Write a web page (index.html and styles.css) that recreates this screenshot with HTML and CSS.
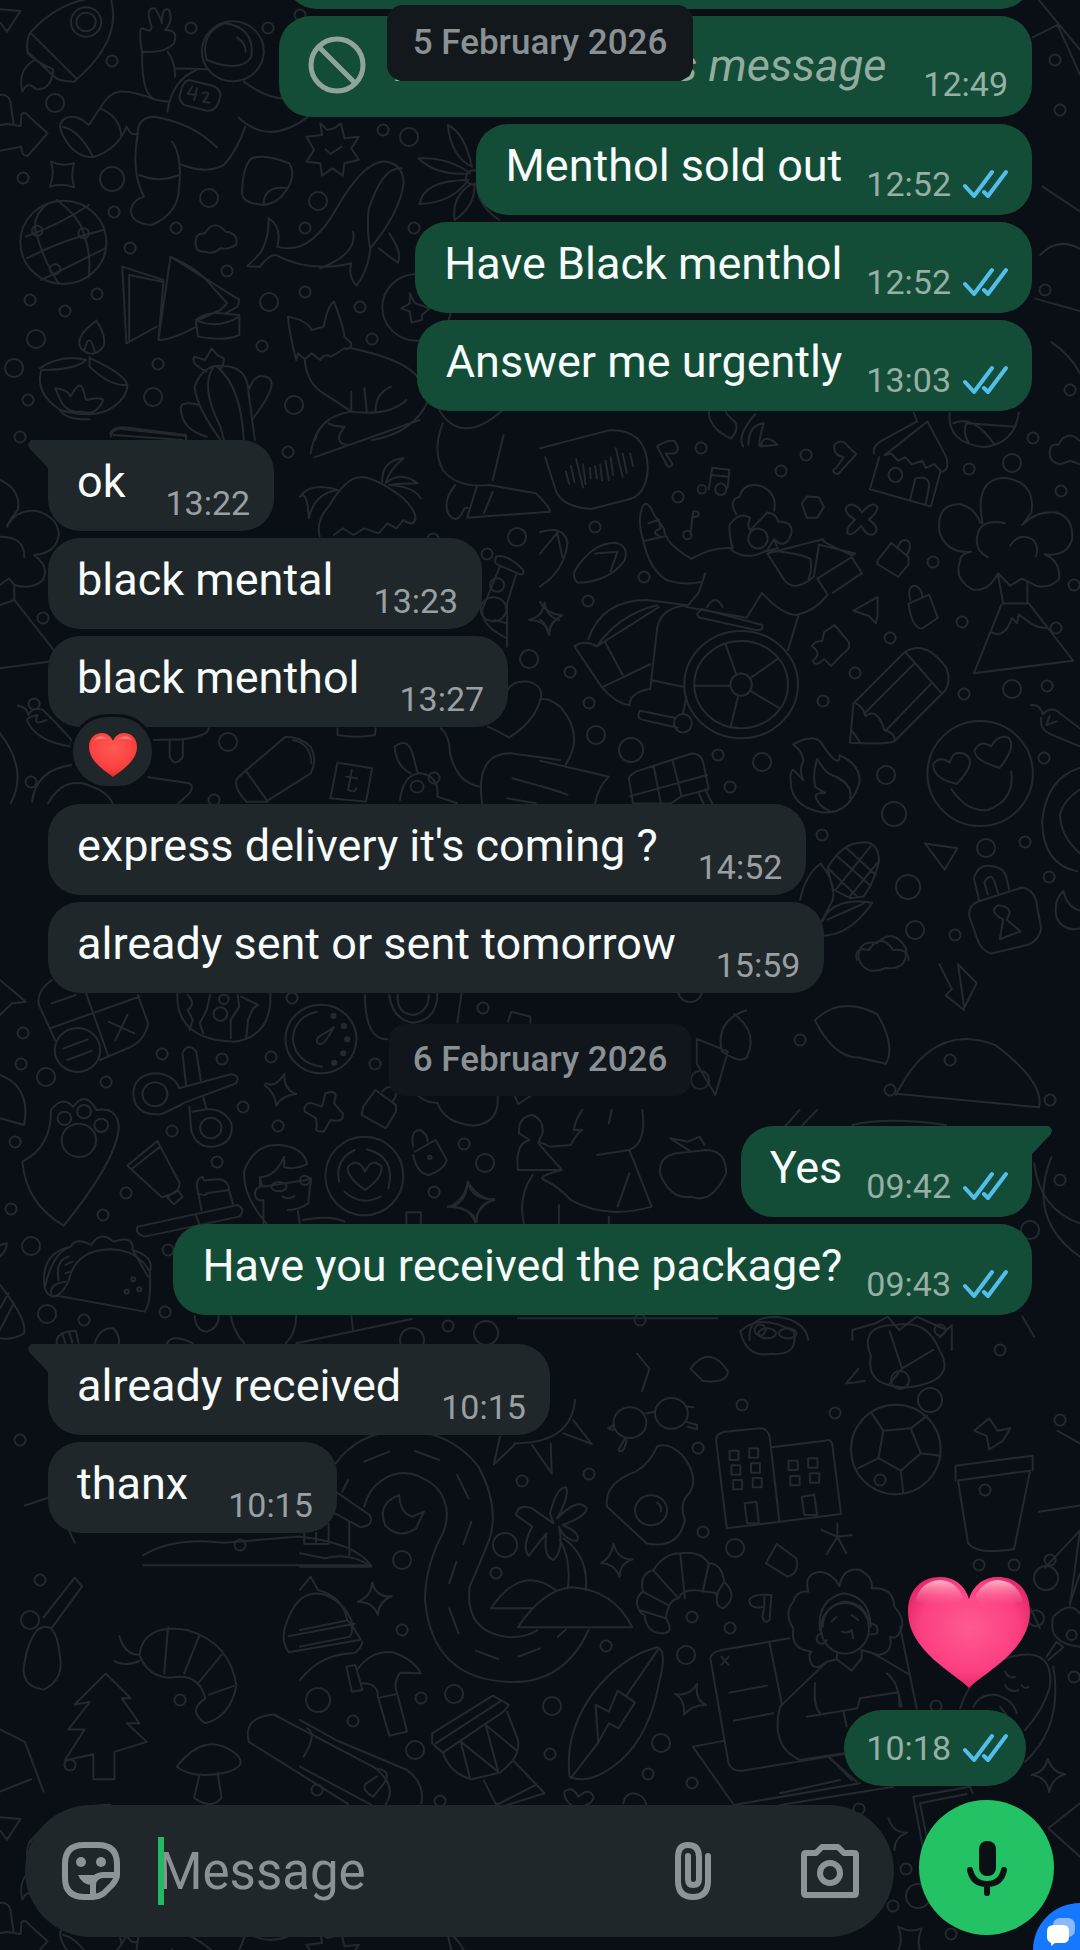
FILE: index.html
```html
<!DOCTYPE html>
<html lang="en">
<head>
    <meta charset="UTF-8">
    <meta name="viewport" content="width=device-width, initial-scale=1.0">
    <title>Chat</title>
    <link rel="stylesheet" href="styles.css">
</head>
<body>
    <!-- Wallpaper doodles, one group per area -->
    <svg class="wallpaper" viewBox="0 0 1080 1950" preserveAspectRatio="xMidYMin slice" aria-hidden="true">
        <defs>
            <symbol id="check" viewBox="0 0 45 30">
                <path d="M2 17l9 10L29 3M21 23l4 4L43 3" fill="none" stroke="#53bdeb" stroke-width="4" stroke-linecap="round" stroke-linejoin="round"/>
            </symbol>
            <path id="dots-s" d="M268 28h.1M191 28h.1M300 15h.1M112 61h.1M23 178h.1M114 212h.1M176 228h.1M130 248h.1M30 300h.1M97 294h.1M65 311h.1M227 271h.1M305 292h.1M305 228h.1M360 307h.1M372 339h.1M262 346h.1M158 364h.1M28 400h.1M383 130h.1M414 228h.1M20 437h.1M288 452h.1M433 539h.1M487 554h.1M43 618h.1M34 704h.1M31 782h.1M214 800h.1M434 778h.1M701 448h.1M806 455h.1M781 471h.1M678 497h.1M969 469h.1M1033 438h.1M1061 491h.1M595 527h.1M644 577h.1M588 601h.1M933 562h.1M890 638h.1M962 622h.1M1056 628h.1M1074 585h.1M570 672h.1M589 703h.1M823 701h.1M855 673h.1M964 694h.1M1047 686h.1M1044 758h.1M718 755h.1M730 787h.1M822 835h.1M1025 842h.1M1049 877h.1M955 935h.1M23 1033h.1M21 1064h.1M106 1082h.1M162 1054h.1M222 1059h.1M271 1057h.1M292 998h.1M243 1107h.1M278 1126h.1M172 1131h.1M15 1142h.1M217 1162h.1M126 1193h.1M11 1209h.1M103 1215h.1M168 1250h.1M165 1312h.1M84 1320h.1M464 1144h.1M434 1192h.1M483 1008h.1M448 1326h.1M375 1064h.1M522 1481h.1M589 1474h.1M698 1448h.1M703 1532h.1M742 1405h.1M835 1413h.1M496 1573h.1M402 1630h.1M692 1617h.1M730 1628h.1M606 1646h.1M421 1698h.1M353 1721h.1M550 1754h.1M648 1774h.1M692 1783h.1M440 1801h.1M317 1790h.1M979 1565h.1M1014 1565h.1M936 1706h.1M1074 1677h.1M859 1809h.1M906 1869h.1M893 1906h.1M951 1934h.1M20 1440h.1M63 1490h.1M240 1545h.1M40 1580h.1M70 1765h.1M180 1700h.1M1000 1350h.1M940 1330h.1M1060 1420h.1M880 1480h.1M985 1490h.1M1050 1560h.1M890 1090h.1M950 1060h.1M1050 1100h.1M1060 1180h.1M800 1040h.1M760 1330h.1M640 1320h.1M1055 60h.1M1060 110h.1M1045 290h.1M1070 390h.1"/>
            <path id="dots-m" d="M55 103h.1M209 198h.1M318 201h.1M36 339h.1M269 302h.1M153 397h.1M14 368h.1M409 137h.1M294 405h.1M517 537h.1M1012 463h.1M596 735h.1M762 762h.1M886 775h.1M1012 689h.1M986 848h.1M915 930h.1M46 1077h.1M31 1246h.1M47 1314h.1M485 1163h.1M402 1560h.1M454 1694h.1M686 1655h.1M552 1706h.1M415 1750h.1M661 1743h.1M735 1548h.1M529 659h.1M228 742h.1M802 1180h.1M30 1620h.1M900 1380h.1M1030 1230h.1M700 1080h.1"/>
            <path id="dots-l" d="M112 179h.1M631 750h.1M894 814h.1M908 887h.1M505 1545h.1M486 1333h.1M318 1700h.1M930 1400h.1M1046 1578h.1M918 1896h.1M412 1340h.1M690 990h.1"/>
        </defs>
        <g class="rings">
            <use href="#dots-s" class="ring-s"/><use href="#dots-s" class="hole-s"/>
            <use href="#dots-m" class="ring-m"/><use href="#dots-m" class="hole-m"/>
            <use href="#dots-l" class="ring-l"/><use href="#dots-l" class="hole-l"/>
        </g>

        <!-- rocket, astronaut, globe, whale, lamp, cactus, fox -->
        <g id="space" transform="scale(.3444 .3333)">
            <path d="M0 28L60 33L20 95L0 68M88 98Q180-10 320-10Q360 120 215 245L190 243Q165 240 158 230L80 155Q75 120 88 98ZM88 98L222 236M80 160Q110 190 155 208Q150 270 105 268Q80 240 65 275Q50 210 100 180"/>
            <circle cx="250" cy="66" r="44"/><circle cx="250" cy="66" r="28"/>
            <path d="M413 160Q400 80 415 85Q440 100 440 80Q420 20 450 25Q465 50 470 70Q470 20 490 28Q505 60 480 90Q520 90 505 130Q480 160 415 155ZM413 160Q410 290 455 300L490 305M487 155Q510 190 508 230M508 205L600 208M455 300Q380 270 345 275Q315 280 290 325L258 375Q220 340 190 355Q165 370 180 400Q210 470 270 472Q340 450 368 380M290 325Q350 350 352 410M368 380Q380 410 400 400Q400 350 450 350Q560 370 630 442M486 335Q500 240 570 210M708 245Q780 300 835 295M692 352Q780 440 895 350M712 380Q690 450 650 495Q600 525 522 492M500 425Q530 470 520 560Q520 640 440 675Q380 670 380 630Q385 600 418 590Q380 520 400 400M405 525Q460 550 520 525M548 240L620 258Q645 270 638 295Q630 335 600 332L535 315Q515 300 525 275Q530 245 548 240Z"/>
            <circle cx="676" cy="154" r="90"/><path d="M600 180Q580 100 650 70Q740 80 730 170Q700 220 600 180M688 112Q715 130 713 155M558 260L545 282L570 285M572 265L564 300M588 280Q620 270 590 305L608 308"/>
            <path d="M0 375L20 372L60 378L62 345Q70 330 85 350L138 400L80 468Q62 470 62 440L0 452M0 285Q30 280 32 320L40 375M148 485Q180 500 215 490Q205 525 215 562Q180 548 145 560Q160 520 148 485M182 380Q230 390 270 470"/>
            <circle cx="184" cy="727" r="125"/><path d="M75 710Q180 670 258 615M78 775Q180 720 300 690M120 840Q200 800 305 745M140 610Q90 650 105 700Q130 790 170 850M165 600Q230 650 243 700Q265 760 258 830"/>
            <circle cx="108" cy="692" r="15"/><circle cx="243" cy="700" r="15"/><circle cx="160" cy="808" r="15"/>
            <path d="M355 800L475 840L460 1020L495 770L695 900L690 920L655 940M495 770Q560 800 590 830L660 910L640 930L575 960M355 800L367 1030L455 980M375 825L375 1025M375 825L470 845M460 1020Q500 1020 570 980M568 960Q600 935 640 940L695 945V1005Q650 1025 575 1010ZM568 960Q630 990 695 950"/>
            <path d="M730 475Q770 460 840 490Q860 520 835 565Q810 610 765 615Q700 610 703 575Q705 500 730 475M765 615Q765 555 835 565M570 740Q560 700 595 700Q620 655 655 695Q695 700 685 735Q660 750 640 745Q620 765 595 755Q570 755 570 740M930 370L950 390L970 385L990 370L1000 415L1042 410L1020 445L1042 480L1000 490L995 527L965 505L935 527L930 490L890 485L912 450L890 410L935 405ZM945 448L960 462L992 440"/>
            <path d="M780 655Q820 680 805 740Q900 770 980 620Q1060 480 1120 485Q1170 490 1172 550Q1160 640 1075 745Q1070 810 1035 857Q1010 830 1020 790Q900 820 800 765Q780 765 755 800Q735 800 718 798Q760 760 765 740Q780 710 780 655M1165 505Q1110 500 1070 630Q1065 700 1075 745M1025 695Q1040 760 930 805M1130 700Q1170 760 1155 788Q1130 770 1100 745"/>
            <path d="M1300 375Q1350 400 1370 500Q1310 470 1300 375M1215 475Q1300 470 1365 520Q1270 530 1215 475M1218 612Q1230 540 1360 540Q1310 610 1218 612M1378 550Q1380 620 1320 660Q1310 590 1370 550M1385 560Q1390 620 1450 660"/>
            <circle cx="1375" cy="533" r="22"/><circle cx="1210" cy="922" r="100"/><path d="M1190 880L1205 910L1248 925L1225 945L1225 960L1195 968L1190 935L1165 925L1190 910Z"/>
            <path d="M280 962Q310 1010 300 1040Q270 1080 235 1045Q215 1010 280 962M245 1050Q260 990 275 1055M115 1105Q180 1060 250 1080Q220 1110 120 1110Q100 1180 175 1230Q280 1260 330 1220Q370 1190 370 1155Q320 1160 260 1100V1070M370 1155Q360 1120 262 1075M160 1165Q200 1170 205 1190Q230 1140 240 1165L250 1200Q290 1190 300 1200Q280 1250 240 1235Q200 1240 180 1210ZM175 1230Q190 1260 260 1258"/>
            <path d="M600 1115Q550 1090 565 1070L595 1080L615 1045L630 1065L650 1075Q650 1100 640 1105M640 1320Q570 1220 565 1160Q590 1090 650 1098Q720 1100 722 1180L740 1320M620 1100Q580 1160 640 1280L650 1320M630 1100Q700 1160 708 1320M722 1170Q740 1120 770 1130Q820 1140 735 1255M580 1215Q520 1200 525 1230Q530 1290 600 1310M320 1300Q330 1280 360 1282L540 1305V1320M330 1305L530 1320"/>
            <path d="M860 1080Q840 1000 836 950Q890 960 905 990L940 980Q950 920 970 905Q1000 990 1000 1010L1020 1030Q1020 1050 1000 1045Q980 1060 960 1070Q940 1060 930 1080L905 1060L885 1078L865 1060ZM885 1080Q890 1150 940 1180Q1000 1220 1020 1235M1020 1045Q1180 1080 1215 1135M1020 1175V1235M1058 1165L1065 1235M1090 1235Q1090 1180 1135 1160M1180 1200Q1130 1250 1020 1235Q930 1250 915 1320M1245 1200Q1200 1300 1080 1320M1275 1230Q1340 1340 1460 1230"/>
        </g>
        <use href="#space" y="1808"/>

        <!-- palm hut, clouds, bulb -->
        <g transform="translate(0 420) scale(.3571 .3333)">
            <path d="M870 100Q880 30 920 0M880 112L1175 0M920 10Q930 20 965 20Q930 70 975 75M1240 10Q1210 90 1240 150Q1280 205 1370 195L1500 220Q1540 260 1540 275L1308 293L1335 200M1380 215L1355 280M1275 195Q1240 240 1255 280Q1280 320 1300 265L1310 263M1410 45L1380 180M310 50Q315 20 350 28L522 48M895 350Q885 300 920 260Q970 170 1010 172Q1050 170 1130 235Q1180 290 1155 310Q1140 310 1130 300L1110 325L1085 310L1060 340L1020 325L990 345L960 325L935 345M840 230Q870 185 945 210Q880 220 865 295Q860 210 840 230M1070 185Q1070 120 1130 115Q1090 150 1080 190Q1120 150 1170 190Q1120 190 1090 195Q1160 200 1178 235"/>
            <path d="M0 180Q60 210 50 270Q20 310 20 320Q40 270 100 272Q160 290 165 340Q160 400 95 405Q140 440 120 480Q90 510 40 495L25 475L0 495M0 350Q70 350 68 412M40 500V540L150 690M40 540L0 555M0 745L135 725M1390 410Q1420 400 1465 450Q1470 470 1450 460L1395 435Q1380 430 1390 410M1400 440L1350 570M1350 570Q1350 620 1420 655V610L1385 600M1445 465L1420 550V680"/>
            <circle cx="1392" cy="495" r="20"/><circle cx="1382" cy="568" r="36"/>
            <path d="M1525 548Q1530 590 1565 600Q1540 600 1538 645Q1530 600 1482 600Q1520 590 1525 548M1420 815Q1430 780 1480 785Q1530 800 1510 850Q1490 910 1425 953Q1390 930 1365 920M50 857Q75 860 80 885Q90 860 120 870Q160 910 200 960V980Q100 965 75 900Q80 890 105 885Q90 920 130 900M430 960L510 958Q580 950 585 925M475 960V1010Q490 1045 512 1010V960M945 925V945Q1000 955 1050 945L1052 925M665 1075Q650 1100 690 1145H745L870 1060Q890 1020 870 980Q840 950 800 950L690 1050ZM690 1055L750 1145M820 960Q870 970 872 1030M945 1028L1042 1045L1025 1145L925 1135ZM985 1050L975 1110Q995 1120 998 1105M970 1070L1000 1075M1105 980Q1140 950 1155 1000L1170 1060M1105 980Q1110 1040 1150 1060M1120 1140Q1130 1060 1180 1060Q1230 1070 1225 1130L1280 1150M1235 925Q1260 950 1260 1000Q1280 1090 1345 1100M1350 1150Q1330 1000 1430 1000L1568 1020M1435 1075L1568 1115M1420 1135L1500 1150M90 1145Q100 1050 200 1035M415 1072L530 1090Q545 1100 530 1120L500 1150M135 1150Q170 1080 230 1090Q300 1110 315 1150M0 940Q80 1050 30 1150"/>
            <circle cx="1168" cy="1100" r="18"/>
        </g>

        <!-- wheelchair, volcano, pencil, emoji, fire, lock, corn -->
        <g transform="translate(540 400) scale(.3444 .3571)">
            <path d="M0 135L200 85Q310 80 313 190Q310 270 250 280L150 305Q60 300 45 250L15 160M75 200L85 235M90 185L100 230M105 165L125 245M125 180L132 235M145 190L147 220M160 185L165 220M175 180L180 225M190 170L200 225M205 160L212 210M220 135L240 215M240 150L252 205M262 150L270 185M340 130Q370 110 390 115Q410 140 390 150L365 150L385 180Q380 190 370 185ZM490 30Q490 80 555 108Q580 80 565 60Q540 40 540 32M590 130Q570 100 625 40M605 125Q605 70 650 65Q630 130 640 130Q650 90 690 125L640 130M855 125Q870 110 885 120L918 152L865 208Q840 200 860 190L882 160Q850 155 855 125"/>
            <path d="M490 250L500 190L550 195L545 245M497 210L548 215M437 375L445 312Q465 310 460 325L440 330"/><circle cx="470" cy="250" r="12"/><circle cx="525" cy="250" r="16"/><circle cx="428" cy="378" r="12"/>
            <path d="M300 295Q315 280 330 320L360 360Q360 400 440 445Q500 410 560 415Q550 390 550 350Q580 310 610 330Q600 350 610 365L660 315Q690 320 690 340Q740 340 728 380Q710 420 680 390L660 420Q760 430 785 445Q790 480 780 500M660 430L710 505Q740 540 795 495L810 405L915 430L905 435L830 400L820 390ZM570 320Q545 280 580 270Q590 230 640 240Q690 260 680 310M680 390L690 415L650 425Q600 450 555 420M300 395Q320 480 370 505Q420 520 465 510M480 485L460 540L425 580L600 610L645 540Q700 600 745 602Q800 590 835 545L805 500L905 440L935 485L850 540M750 605L720 700M300 395Q280 330 300 295M300 395L360 382M315 345L345 335L350 360Q320 370 345 380"/>
            <circle cx="633" cy="388" r="28"/><path d="M140 670Q180 560 310 560L430 575Q350 580 340 640L320 810M165 690Q230 600 340 575M100 690L180 805L320 740M100 690Q130 670 165 690L345 580M190 680L240 770M180 805Q220 850 260 855Q260 820 315 810M325 785L415 803M290 870Q280 890 295 895L400 918M290 870L390 890M460 595Q450 600 465 610L630 645Q650 645 645 630L470 585ZM485 580Q510 540 530 580"/>
            <ellipse cx="584" cy="797" rx="165" ry="150"/><ellipse cx="584" cy="797" rx="136" ry="122"/><circle cx="584" cy="797" r="31"/><circle cx="415" cy="905" r="26"/>
            <path d="M538 682L570 768M690 725L612 778M695 863L612 815M553 917L575 830M450 800H552M415 880L425 830"/>
            <path d="M970 150Q965 130 990 115L1095 60L1085 35M1125 60L1180 160Q1190 200 1165 200L1145 180L1120 190L1110 170L1080 180L1060 160L1040 170L1020 150L1000 155ZM985 160L958 250L1135 298L1163 200M1075 278L1090 220Q1130 210 1130 240L1120 290M1190 35Q1180 120 1290 132Q1380 120 1390 35M1240 65L1380 75M1200 65Q1260 40 1320 125M1240 60Q1225 90 1245 120"/><circle cx="1032" cy="210" r="20"/>
            <path d="M760 290L775 270L810 272L824 300L805 330L775 330ZM890 300Q910 280 935 315Q965 280 980 300Q980 315 955 335Q990 360 970 375Q950 385 933 352Q905 385 892 372Q890 355 915 335Q880 315 890 300M980 450L1020 400L1070 440L1070 460L1040 495L980 460ZM1040 410Q1050 385 1070 395Q1080 410 1065 435M1070 570L1130 545L1155 610L1110 640Q1080 640 1070 570M1075 560Q1065 520 1090 520Q1110 530 1110 550M910 590L980 552V605L975 625L955 605ZM855 630L890 670Q910 690 880 710L845 745L825 725Q800 750 792 730Q820 710 790 690Q795 675 820 675L825 650ZM0 565Q20 600 65 603Q30 620 25 655Q15 620 0 615M100 480Q150 400 220 400Q260 410 245 450Q200 510 110 512Q95 500 100 480M160 430L225 425L205 480M0 430L50 372L65 440M0 370Q70 350 80 400Q70 480 0 522"/>
            <path d="M1285 345Q1260 220 1350 218Q1440 230 1427 315L1400 350Q1440 310 1500 315Q1550 330 1545 390Q1530 440 1465 432Q1510 450 1508 500Q1480 530 1440 520L1400 500L1365 520L1330 485Q1300 540 1255 530Q1200 500 1220 450Q1220 430 1252 425Q1180 430 1160 370Q1150 290 1220 292Q1260 300 1280 345M1300 440Q1260 420 1270 380Q1280 330 1350 345M1365 408Q1390 370 1430 390Q1450 410 1440 438M1330 490L1345 570H1415V510M1340 572L1260 765L1548 730L1420 570M1310 650Q1350 670 1370 610L1385 625L1390 600L1410 615Q1440 640 1470 638M1480 150Q1480 120 1505 125Q1530 80 1568 115M1480 150Q1480 175 1510 180L1540 170L1568 180"/>
            <path d="M900 960L910 850L1060 705Q1120 670 1180 750Q1195 790 1175 815L1030 955Q1020 965 900 960M915 848Q940 860 945 885Q980 860 1000 925Q1030 930 1030 955M1060 705L1165 820M945 875L1085 740M1005 925L1135 795M905 925L930 960"/>
            <ellipse cx="1278" cy="1046" rx="153" ry="147"/><path d="M1210 1075Q1140 1060 1142 1020Q1160 995 1190 1015Q1200 980 1230 990Q1275 1010 1210 1075M1335 1030Q1260 1010 1262 980Q1280 950 1310 970Q1330 935 1360 945Q1385 970 1335 1030M1195 1090Q1240 1155 1300 1148Q1380 1120 1368 1040M735 965Q800 930 820 965Q850 1010 865 1010Q870 1010 870 995Q930 1020 928 1070Q900 1160 820 1155Q730 1140 728 1070Q725 1040 735 1035L765 1065Q750 1040 765 1010Q760 980 735 965M805 1005Q790 1050 800 1085L828 1100Q800 1100 800 1110Q810 1140 840 1150M805 1005Q830 1050 860 1055Q910 1080 900 1115"/>
            <path d="M1248 1450Q1240 1420 1270 1405L1400 1365Q1430 1370 1440 1400L1455 1480Q1450 1510 1420 1525L1310 1550Q1280 1540 1270 1510ZM1275 1400L1260 1340Q1270 1300 1310 1305Q1350 1310 1355 1340L1362 1370M1300 1385L1290 1350Q1310 1320 1320 1350L1330 1380M1335 1510L1345 1455Q1300 1430 1330 1415Q1380 1420 1355 1455L1395 1488ZM1118 1242L1212 1255L1175 1315ZM835 1310Q880 1240 930 1240Q980 1230 985 1290Q970 1350 940 1390L900 1395L850 1370ZM860 1275L960 1360M890 1255L975 1330M835 1310L920 1390M860 1370L960 1250M900 1390L985 1290M755 1400Q770 1330 815 1298Q860 1350 850 1400L815 1465M820 1460Q850 1390 965 1408Q900 1500 820 1500M835 1455L940 1410M920 1568Q910 1530 955 1540Q990 1490 1025 1540Q1070 1535 1070 1568M1560 1320Q1460 1300 1458 1180Q1470 1060 1568 1030M1568 1270Q1510 1220 1510 1160Q1520 1120 1568 1090M1520 1375Q1490 1400 1500 1450Q1520 1490 1568 1480M1520 1375Q1530 1420 1568 1430M1425 855Q1450 850 1460 880Q1480 860 1500 870L1568 920M1455 890Q1450 920 1480 935L1568 970M1480 885L1470 910L1500 900M258 1060Q260 1050 280 1040L440 990Q470 990 475 1020L490 1090L410 1110L380 1130H270ZM330 1025L350 1125M385 1010L410 1105M260 1110L485 1050M460 1100L475 1130M480 1090L500 1130M0 1010L200 1055Q170 1080 160 1130M0 1080L80 1105M75 1020Q130 940 60 860Q20 830 0 840"/>
        </g>

        <!-- flags, stopwatch, scissors, tooth, taco, girl, coffee -->
        <g transform="translate(0 960) scale(.3444 .3333)">
            <path d="M0 60L75 125L35 130L0 165M150 60Q100 100 115 140L160 240M250 100L315 290M145 205L405 110M400 105L430 190Q420 245 370 265L290 300M150 130L220 105M315 185L390 220M370 165L335 240M185 265L255 238M195 300L268 272M515 100Q510 240 680 245Q790 230 785 100M545 105Q570 130 545 150L560 180L550 210M610 105L600 150L580 190L590 220M690 105L695 140L670 180V235M700 110L750 135L735 145L720 180L715 235M920 155Q855 170 850 238Q860 310 935 320M970 202L950 235Q935 260 922 248Q915 235 930 228ZM1060 105Q1060 240 1125 238M1130 105Q1140 180 1200 188Q1270 180 1270 100M1155 105Q1150 160 1200 165Q1245 155 1245 105M1340 100L1328 188M1475 185L1485 155L1540 170V188"/>
            <circle cx="225" cy="270" r="66"/><circle cx="932" cy="237" r="103"/><circle cx="640" cy="162" r="20"/><circle cx="650" cy="118" r="14"/>
            <circle cx="450" cy="403" r="36"/><circle cx="612" cy="504" r="31"/><path d="M525 435L470 462Q390 470 387 400Q390 340 460 340Q510 350 520 385L670 343Q700 345 685 370L530 430ZM540 375L530 280Q545 245 570 275L583 360M550 440L555 510Q570 565 620 560Q680 550 672 490Q650 445 600 448L590 412M558 455L600 448"/>
            <path d="M65 605Q150 560 148 450Q180 405 212 440Q250 390 280 450Q340 440 345 500Q340 600 185 797Q75 730 65 605"/><circle cx="187" cy="475" r="20"/><circle cx="244" cy="455" r="20"/><circle cx="294" cy="496" r="20"/><circle cx="229" cy="541" r="50"/>
            <path d="M0 345Q90 380 70 495L0 475M370 617L457 543L522 670Q520 690 505 700L470 712ZM385 625L465 560M485 712L515 690L530 710L505 733ZM400 800L690 735Q715 750 695 770L420 830Q390 820 400 800M568 765L580 795M585 750L572 680Q570 655 588 650Q590 665 600 660L640 658Q665 665 665 690L678 738M575 700Q600 710 600 700L665 690M772 370Q800 385 825 342Q825 390 860 402Q820 405 802 437Q800 400 768 375M945 400Q970 390 975 405L970 430L995 460Q1000 490 960 480L940 515Q910 515 920 500L918 475L885 455Q880 435 900 428L935 440ZM1055 440L1090 390L1150 435V455L1120 505L1050 465ZM1110 395Q1130 370 1148 390Q1155 405 1140 425M1205 575L1265 540L1297 600Q1290 630 1245 645Q1210 640 1200 585M1200 560Q1190 510 1220 510Q1240 520 1242 545M1358 665Q1370 720 1435 718Q1385 740 1380 788Q1365 740 1305 740Q1350 720 1358 665"/>
            <circle cx="1248" cy="592" r="5"/><path d="M773 790Q700 700 710 630Q740 550 810 555Q880 560 892 612Q860 630 825 622V590Q800 650 755 652V680Q735 690 742 710Q750 725 765 720V790M755 652L762 680L890 660Q910 640 900 680L895 730Q870 750 835 750M865 752L870 790M820 710Q840 720 855 708M880 780Q960 765 1000 785M1180 790V757H1222V790"/>
            <ellipse cx="810" cy="680" rx="22" ry="14"/><circle cx="885" cy="661" r="14"/><ellipse cx="1058" cy="648" rx="113" ry="118"/><path d="M1060 690Q1005 650 1010 620Q1040 590 1060 635Q1080 590 1108 620Q1110 655 1060 690M1030 570Q970 600 985 665M1065 568Q1150 590 1128 685M1000 695Q1050 740 1105 710"/>
            <path d="M130 985Q115 880 205 860Q220 830 265 855Q290 810 330 845Q390 825 385 870Q450 890 435 935M205 860Q150 880 130 985Q140 1015 170 1008L420 1055Q440 1030 435 935Q400 870 320 868Q220 870 200 960Q180 1010 150 1010M150 1010Q140 970 190 965M200 890Q160 900 170 960M385 870L430 950M190 940L205 935M190 915L210 905"/><circle cx="387" cy="958" r="6"/><circle cx="368" cy="995" r="6"/><circle cx="404" cy="988" r="6"/>
            <path d="M0 975Q80 1080 70 1120Q40 1140 0 1135M0 1045L25 1000M0 1110L40 1030M0 890Q20 870 20 850L0 855M165 1150Q160 1115 220 1112L228 1150M180 1120L190 1150M200 1115L210 1148M275 1150Q290 1100 330 1105Q350 1130 345 1150M485 1150Q500 1120 560 1150M565 1068Q570 1115 600 1115Q635 1105 635 1068M670 1068Q680 1120 710 1150M860 1068Q860 1120 830 1150M1020 1068L1025 1110M860 1150L1195 1077M1215 408Q1240 430 1270 428Q1290 490 1375 497Q1450 490 1445 410M1495 410L1505 432L1540 408"/>
            <path class="solid" d="M968 168h1M998 198h1M1008 238h1M996 280h1M970 308h1"/>
        </g>

        <!-- person with drink, apple, pin, watermelon -->
        <g transform="translate(160 1110) scale(.5867 .3333)">
            <path d="M610 180Q605 100 630 90L612 70Q610 20 635 15Q655 30 652 70L645 95L665 110L700 105Q710 70 720 60L705 60Q710 20 720 0M645 100L685 180H612M685 180Q640 200 655 210Q680 230 700 270Q760 330 838 290L800 120L745 135M770 0L765 40M800 120Q830 100 822 0M620 340Q610 260 635 195M680 340V285M765 340V320M800 190L780 290M610 625H950M880 130Q850 140 852 190Q870 270 905 260Q940 285 965 190Q965 120 930 120L905 125ZM905 125L870 85L900 95L920 80L928 105M490 290Q520 290 525 215Q540 265 570 270Q540 280 540 335Q530 290 490 290M1060 60L1090 0M1120 0L1090 55M1180 45Q1240 20 1340 45"/>
            <path d="M1005 690Q1000 620 1050 620Q1100 630 1105 690M1470 620L1490 680M1180 690V660L1220 640L1240 620L1260 660L1290 620L1340 660M1490 160Q1500 300 1568 340"/><circle cx="1035" cy="670" r="15"/><circle cx="1070" cy="670" r="15"/>
        </g>

        <!-- sun, road, island, egg, city, croissant, hammer, drum, leaf, laptop -->
        <g transform="translate(300 1400) scale(.3571 .3333)">
            <path d="M560 110L543 193L605 130M650 135L705 220L702 130M738 100L817 132L765 60M770 0Q760 130 600 130M100 190Q160 100 280 90Q420 90 500 200Q560 320 530 420Q500 500 475 560Q460 700 590 712Q640 710 665 690M808 690Q740 850 590 846Q370 840 350 600Q350 500 400 400Q430 320 380 260Q300 190 230 240Q190 270 180 320M180 185L250 155M322 153L390 180M440 225L472 295M480 365L458 432M438 485L418 550M418 625L444 700M492 752L555 777M612 770L672 745M135 240L118 275M722 710L745 688M100 275L195 345Q210 375 170 382L98 340M278 285Q215 310 238 375Q275 420 325 385L347 335L315 350Q280 340 278 285"/>
            <path d="M710 370L700 340Q720 260 745 262Q755 290 720 355Q780 290 803 325Q800 350 735 375Q790 400 775 423Q740 420 725 380Q740 450 710 480Q680 470 690 400L640 468Q620 440 650 380L605 345Q610 310 650 325L710 370M728 420Q760 480 750 565M738 415Q810 470 800 570M610 682Q680 570 760 562Q880 570 930 682ZM535 625Q620 490 718 572M535 625H650"/>
            <path d="M1000 140Q1030 125 1070 165Q1120 230 1090 280Q1060 310 1078 360Q1060 450 970 430L860 320Q850 250 940 215Q980 190 1000 140"/><circle cx="983" cy="331" r="45"/><path d="M1000 308Q1015 320 1010 335"/>
            <circle cx="924" cy="68" r="46"/><circle cx="1040" cy="40" r="46"/><path d="M970 40L995 35M880 75L862 85L878 90M910 115L892 150Q905 165 915 120M1080 65L1112 75V88L1085 80M1085 20L1102 22"/>
            <path d="M1195 385L1165 120Q1165 100 1190 95L1290 85Q1310 85 1315 110L1342 360M1195 385L1515 342L1490 130Q1485 115 1470 122L1320 142M1245 310L1278 305L1285 370H1252ZM1405 290L1440 284L1448 345H1412Z"/>
            <path d="M1203 152h25v28h-25zM1208 196h25v28h-25zM1213 240h25v28h-25zM1258 145h25v28h-25zM1263 190h25v28h-25zM1268 234h25v28h-25zM1368 182h26v28h-26zM1373 228h26v28h-26zM1423 175h26v28h-26zM1428 220h26v28h-26z"/>
            <path d="M955 640Q930 600 960 575Q950 520 990 510Q1020 460 1065 460Q1120 450 1145 490Q1180 490 1188 545Q1230 590 1185 625Q1160 620 1170 580L1140 575Q1070 560 1060 595Q1030 600 1025 655Q1050 700 1015 700Q970 700 965 645ZM990 512L1060 595M1065 462L1078 595M1145 490L1128 575M960 575L1030 615M950 630L1025 655M1188 545L1165 585"/>
            <path d="M878 432Q890 480 932 478Q895 490 895 530Q880 490 842 490Q870 475 878 432M202 548Q215 595 257 588Q220 605 218 645Q205 605 162 605Q200 590 202 548M1050 882Q1090 890 1112 852Q1105 900 1137 915Q1095 915 1075 945Q1080 900 1050 882M1335 432L1390 475Q1400 520 1365 530L1305 490ZM1320 585L1315 660Q1300 675 1295 650L1300 620Q1260 630 1258 600Q1265 580 1320 585M1300 590V620M1505 370V410L1545 405M1505 410L1530 460M1505 410L1475 462M1505 410L1460 390"/>
            <path d="M0 570L30 530L50 570Q120 590 132 660Q155 680 140 710L0 740M0 690L130 662M0 840Q60 760 150 760Q170 750 175 725M0 460L70 475Q140 455 200 500H0M12 400V432H80V370M45 398V432M138 365V465M130 800L155 795L175 870L145 875ZM160 810Q200 750 260 757Q320 780 338 820L280 818Q260 850 272 880L300 995L250 1007L218 890Q220 850 175 850M222 893L272 882M0 960L100 1020L300 1110Q350 1150 340 1210M0 1100L200 1215"/>
            <path d="M370 1000L540 887L585 915L570 935L400 1058L370 1030ZM380 1030L560 905M400 1058Q420 1120 480 1138L560 1118Q620 1070 610 1020L580 935M450 1025L475 1130M450 1025L555 1115L520 975L605 1050M515 1142L550 1215M600 1085L685 1180L580 1215M550 1215L660 1155"/>
            <path d="M755 1130Q740 1000 820 880Q900 770 1000 742Q1030 750 1005 850Q980 1000 900 1080Q810 1160 755 1130M758 1135L835 1028L828 915L865 935L890 872L938 908L892 985L865 970L835 1028M915 885L1005 745M20 985Q50 1000 10 1070M210 1105Q260 1110 235 1150L205 1190Q170 1170 185 1150L215 1130M740 1175Q760 1155 780 1190Q810 1160 822 1190Q820 1210 800 1215M740 1175Q740 1200 760 1215M905 1210Q910 1180 935 1180Q965 1185 970 1215"/>
            <path d="M1190 1022L1100 1040L1215 1215L1568 1150M1480 1070L1545 1140M1150 780Q1145 760 1180 750L1370 715M1150 780L1200 1090Q1210 1115 1240 1112L1568 1055M1315 730L1350 915M1180 770L1200 795M1200 770L1180 795M1202 878L1308 857M1215 962L1325 940"/>
        </g>

        <!-- curly hair portrait, crate, paper boat -->
        <g transform="translate(780 1560) scale(.3333)">
            <path d="M90 300Q85 280 95 275Q30 270 40 205Q10 160 40 125Q50 90 85 95Q70 40 120 35Q160 40 178 78Q190 20 240 30Q280 50 275 85Q340 80 343 140Q380 180 360 215Q350 240 330 230Q340 280 295 285L280 280M140 305Q100 340 90 300M120 210Q110 120 190 100Q270 110 272 200M128 200Q130 140 190 125Q250 125 265 180M125 220Q105 225 112 245Q130 260 140 240M270 190Q300 195 290 220Q275 225 270 222M172 275L170 298L215 332L245 295V270M0 440L140 305L170 298M245 270L280 280L390 345M105 370Q100 440 120 460M80 470L190 452L232 445L240 415L355 397L365 440M190 452L200 500M320 340Q360 370 358 440M0 440Q-30 560 60 600L190 580M360 200L410 445M0 700L180 660M145 590L230 665M0 735L340 680M400 710L570 680L578 700M400 710L430 870M420 730L560 702M420 730L440 830M780 205Q750 140 750 145M720 285Q820 270 810 380Q790 450 735 510M820 320Q850 500 735 605M540 445Q590 300 720 285M580 440Q600 400 650 405Q700 420 710 460M675 335Q690 360 705 350M675 375Q690 400 715 390M725 375Q735 390 745 380M800 290L830 245L850 262L805 300M900 160Q870 120 820 170Q800 250 900 260M870 130L900 40M803 597Q820 640 855 643Q815 655 808 697Q800 650 755 645Q795 635 803 597M900 730L805 805L900 890M325 775Q340 820 382 818Q345 830 343 870M355 1100Q390 1120 425 1105Q410 1140 420 1170M355 1100Q370 1140 355 1170M680 465L660 440"/>
            <ellipse cx="195" cy="205" rx="72" ry="76"/><circle cx="875" cy="225" r="15"/><circle cx="768" cy="175" r="24"/><path d="M155 185L170 170M185 215Q205 222 215 210L220 235M215 165L235 180"/>
        </g>

        <!-- heads, turtle, ball, flowers and trees along the edges -->
        <g transform="scale(1.2442)">
            <path d="M835 0L868 40M830 30L850 20L868 60M838 150L868 170M836 205Q850 190 868 200M832 240L868 250M845 275Q860 285 868 300M720 880Q750 820 800 840Q840 870 835 890L720 879M655 820Q675 800 705 815Q720 840 712 855L690 850Q670 850 655 820M770 775L785 790L775 810ZM690 770Q690 755 705 758Q718 745 728 762Q730 780 712 778Q695 785 690 770M755 775L765 795L760 800L775 812M590 815Q610 830 600 850M600 812Q575 820 580 845Q595 855 600 850M560 835L585 845L575 880L560 855ZM845 930Q825 980 868 1010M850 1150L868 1160M700 1090Q690 1065 720 1065Q745 1060 755 1085Q770 1110 730 1115Q695 1115 700 1090M715 1070L725 1100L750 1085M725 1100L715 1112M690 1100L680 1112L695 1110M755 1075L765 1065V1085M595 1070Q610 1055 638 1070Q642 1090 620 1088Q600 1092 595 1070M512 1088L522 1100L516 1118M555 1100Q570 1080 585 1102Q585 1112 565 1110Z"/>
            <circle cx="720" cy="1165" r="36"/><path d="M710 1150L732 1148L740 1168L724 1182L706 1172ZM710 1150L700 1135M732 1148L745 1138M740 1168L756 1170M724 1182L726 1200M706 1172L690 1180"/>
            <path d="M795 1140L802 1150L812 1148L806 1158L795 1165L793 1154L783 1150ZM770 1190L828 1182L815 1245Q785 1250 778 1240ZM768 1190V1178L830 1170V1182M835 1215L868 1210M840 1260L868 1230L860 1290M115 1250Q140 1235 180 1240L240 1235Q285 1240 298 1258H115M40 1195L60 1240M20 1210L50 1200M30 1310Q45 1300 48 1330Q52 1350 35 1358Q15 1355 20 1335Q22 1320 30 1310M35 1300L60 1268L66 1275L42 1308"/>
            <path d="M112 1330Q115 1305 150 1310Q185 1320 190 1355Q185 1380 165 1385Q150 1375 165 1365Q160 1345 140 1348Q120 1350 112 1330M135 1308L132 1345M160 1315L148 1345M178 1330L160 1352M188 1355L168 1362M112 1330Q100 1330 96 1315M112 1335Q100 1340 92 1335M230 1305Q240 1275 262 1282Q280 1290 284 1308L290 1318L232 1328Q225 1318 230 1305M232 1315L285 1305"/>
            <path d="M85 1345L60 1370L72 1368L55 1390H68L52 1415L75 1410V1430H92L92 1408L118 1400L102 1385H112L98 1365H105ZM142 1420Q165 1390 190 1410Q200 1420 180 1425Q155 1430 142 1420M160 1428L156 1445Q170 1455 178 1445L175 1425M0 1390L20 1400L35 1440M0 1440L25 1430M200 1400Q195 1380 220 1378L300 1420Q320 1435 310 1450M200 1400L280 1450"/>
        </g>
    </svg>

    <div class="day day-floating"><time datetime="2026-02-05">5 February 2026</time></div>

    <main class="chat">
        <div class="bubble sent previous"></div>
        <div class="bubble sent deleted">
            <svg class="ban" viewBox="0 0 58 58" aria-hidden="true"><circle cx="29" cy="29" r="26"/><path d="M11 11l36 36"/></svg>
            <p>You deleted this message</p>
            <span class="meta">12:49</span>
        </div>
        <div class="bubble sent">
            <p>Menthol sold out</p>
            <span class="meta">12:52 <svg class="check"><use href="#check"/></svg></span>
        </div>
        <div class="bubble sent">
            <p>Have Black menthol</p>
            <span class="meta">12:52 <svg class="check"><use href="#check"/></svg></span>
        </div>
        <div class="bubble sent">
            <p>Answer me urgently</p>
            <span class="meta">13:03 <svg class="check"><use href="#check"/></svg></span>
        </div>

        <div class="bubble received first">
            <p>ok</p>
            <span class="meta">13:22</span>
        </div>
        <div class="bubble received">
            <p>black mental</p>
            <span class="meta">13:23</span>
        </div>
        <div class="bubble received has-reaction">
            <p>black menthol</p>
            <span class="meta">13:27</span>
            <button class="reaction" type="button" aria-label="Heart reaction">
                <svg viewBox="0 0 48 44">
                    <defs>
                        <radialGradient id="red" cx=".5" cy=".35" r=".75">
                            <stop offset="0" stop-color="#ff5a52"/>
                            <stop offset=".6" stop-color="#fb4240"/>
                            <stop offset="1" stop-color="#d91f28"/>
                        </radialGradient>
                    </defs>
                    <path fill="url(#red)" d="M24 44C18 39 0 29 0 14C0 5 6 0 13 0C18 0 22 3 24 8C26 3 30 0 35 0C42 0 48 5 48 14C48 29 30 39 24 44Z"/>
                    <path fill="#ff9c94" opacity=".6" d="M5 7Q11 0 19 6Q11 5 5 7ZM29 6Q37 0 43 7Q37 5 29 6Z"/>
                </svg>
            </button>
        </div>
        <div class="bubble received">
            <p>express delivery it's coming ?</p>
            <span class="meta">14:52</span>
        </div>
        <div class="bubble received">
            <p>already sent or sent tomorrow</p>
            <span class="meta">15:59</span>
        </div>

        <div class="day"><time datetime="2026-02-06">6 February 2026</time></div>

        <div class="bubble sent first">
            <p>Yes</p>
            <span class="meta">09:42 <svg class="check"><use href="#check"/></svg></span>
        </div>
        <div class="bubble sent">
            <p>Have you received the package?</p>
            <span class="meta">09:43 <svg class="check"><use href="#check"/></svg></span>
        </div>

        <div class="bubble received first">
            <p>already received</p>
            <span class="meta">10:15</span>
        </div>
        <div class="bubble received">
            <p>thanx</p>
            <span class="meta">10:15</span>
        </div>

        <div class="big-emoji">
            <svg class="heart" viewBox="0 0 122 111" role="img" aria-label="Pink heart">
                <defs>
                    <radialGradient id="pink" cx=".5" cy=".45" r=".62">
                        <stop offset="0" stop-color="#ff5a92"/>
                        <stop offset=".65" stop-color="#fb3f80"/>
                        <stop offset="1" stop-color="#d81f62"/>
                    </radialGradient>
                    <linearGradient id="shine" x1="0" y1="0" x2="0" y2="1">
                        <stop offset="0" stop-color="#ffb4c8"/>
                        <stop offset="1" stop-color="#ff6a9c" stop-opacity="0"/>
                    </linearGradient>
                </defs>
                <path fill="url(#pink)" d="M61 111C48 97 0 74 0 35C0 12 14 0 32 0C46 0 57 8 61 22C65 8 76 0 90 0C108 0 122 12 122 35C122 74 74 97 61 111Z"/>
                <path fill="url(#shine)" d="M7 24Q13 4 32 3Q48 4 55 20Q50 30 30 28Q16 27 7 24ZM67 20Q74 4 90 3Q109 4 115 24Q106 27 92 28Q72 30 67 20Z"/>
            </svg>
            <span class="meta pill">10:18 <svg class="check"><use href="#check"/></svg></span>
        </div>
    </main>

    <form class="composer">
        <div class="field">
            <button type="button" aria-label="Stickers">
                <svg width="58" height="58" viewBox="0 0 58 58">
                    <path d="M31 55H23Q3 55 3 36V22Q3 3 22 3H36Q55 3 55 22V33Q55 37 50 43L42 51Q37 55 31 55V44Q31 33 42 33H55"/>
                    <path class="fill" d="M16 33H38Q31 37 31 43Q20 43 16 33Z"/>
                    <circle class="fill" cx="19" cy="20" r="5"/><circle class="fill" cx="39" cy="20" r="5"/>
                </svg>
            </button>
            <label class="input-wrap">
                <input type="text" placeholder="Message" aria-label="Message">
                <span class="caret"></span>
            </label>
            <button type="button" aria-label="Attach">
                <svg width="36" height="58" viewBox="0 0 36 58">
                    <path d="M33 14V39Q33 55 18 55Q3 55 3 39V15Q3 3 13 3Q24 3 24 15V37Q24 43 18 43Q13 43 13 37V14"/>
                </svg>
            </button>
            <button type="button" class="camera" aria-label="Camera">
                <svg width="58" height="54" viewBox="0 0 58 54">
                    <path d="M5 9H15L21 3H37L43 9H53Q55 9 55 11V49Q55 51 53 51H5Q3 51 3 49V11Q3 9 5 9Z"/><circle cx="29" cy="29" r="10"/>
                </svg>
            </button>
        </div>
        <button type="button" class="mic" aria-label="Record voice message">
            <svg width="40" height="56" viewBox="0 0 40 56">
                <rect x="12" y="1" width="17" height="35" rx="8" fill="#0b1014"/>
                <path d="M3 30Q6 44 20 44Q34 44 37 30M20 44V53" fill="none" stroke="#0b1014" stroke-width="6" stroke-linecap="round"/>
            </svg>
        </button>
    </form>

    <button type="button" class="bubble-launcher" aria-label="Open chat bubbles">
        <svg width="30" height="28" viewBox="0 0 30 28">
            <rect x="6" y="0" width="22" height="19" rx="7" fill="#8ab9ff"/>
            <path d="M7 7H16Q22 7 22 13V19Q22 25 16 25H8L4 28V25Q0 23 0 19V13Q0 7 7 7Z" fill="#fff"/>
        </svg>
    </button>
</body>
</html>
```
FILE: styles.css
```css
* {
    box-sizing: border-box;
}

body {
    margin: 0;
    position: relative;
    min-height: 100vh;
    display: flex;
    flex-direction: column;
    background-color: #0a0f15;
    color: #f7fbfa;
    font-family: Roboto, "Liberation Sans", sans-serif;
    overflow-x: hidden;
}

button {
    border: none;
    padding: 0;
    background: none;
    cursor: pointer;
}

p {
    margin: 0;
}

/* Wallpaper */
.wallpaper {
    position: absolute;
    top: 0;
    left: 0;
    width: 100%;
    height: 100%;
    z-index: -1;
    fill: none;
    stroke: #23292d;
    stroke-width: 2px;
    stroke-linejoin: round;
    stroke-linecap: round;
}

.wallpaper path,
.wallpaper circle,
.wallpaper ellipse {
    vector-effect: non-scaling-stroke;
}

.wallpaper .solid {
    stroke-width: 6px;
}

.ring-s { stroke-width: 13px; }
.hole-s { stroke-width: 9px; }
.ring-m { stroke-width: 20px; }
.hole-m { stroke-width: 16px; }
.ring-l { stroke-width: 26px; }
.hole-l { stroke-width: 22px; }

.hole-s, .hole-m, .hole-l {
    stroke: #0a0f15;
}

/* Messages */
.chat {
    flex: 1;
    display: flex;
    flex-direction: column;
    align-items: flex-start;
    gap: 7px;
    padding: 0 48px 14px;
}

.bubble {
    position: relative;
    display: flex;
    align-items: flex-end;
    padding: 14px 24px 21px 29px;
    border-radius: 32px;
    font-size: 45px;
    line-height: 56px;
}

.sent {
    align-self: flex-end;
    gap: 24px;
    background-color: #144d37;
}

.received {
    gap: 40px;
    background-color: #1f272a;
}

.meta {
    display: flex;
    align-items: center;
    gap: 12px;
    margin-bottom: -10px;
    font-size: 34px;
    line-height: 40px;
    color: #97afa4;
}

.received .meta {
    margin-bottom: -13px;
    color: #9a9fa2;
}

.check {
    width: 45px;
    height: 30px;
}

/* Space between the two speakers */
.sent + .received,
.received + .sent {
    margin-top: 22px;
}

/* Tail of the first bubble in a group */
.first::before {
    content: "";
    position: absolute;
    top: 0;
    width: 20px;
    height: 28px;
    background-color: inherit;
}

.received.first {
    border-top-left-radius: 0;
}

.received.first::before {
    right: 100%;
    clip-path: polygon(0 4px, 3px 0, 100% 0, 100% 100%, 1px 8px);
}

.sent.first {
    border-top-right-radius: 0;
}

.sent.first::before {
    left: 100%;
    clip-path: polygon(0 0, 17px 0, 100% 4px, 19px 8px, 0 100%);
}

.previous {
    width: 747px;
    height: 100px;
    margin-top: -91px;
}

.deleted {
    gap: 37px;
    padding-top: 20px;
    padding-bottom: 23px;
    font-style: italic;
    color: #93aca0;
}

.deleted .meta {
    font-style: normal;
}

.deleted p {
    margin-left: -16px;
}

.ban {
    width: 58px;
    height: 58px;
    fill: none;
    stroke: #8fa59b;
    stroke-width: 5px;
}

.has-reaction {
    margin-bottom: 70px;
}

.reaction {
    position: absolute;
    left: 22px;
    top: 78px;
    display: flex;
    align-items: center;
    justify-content: center;
    width: 85px;
    height: 75px;
    padding-top: 6px;
    border: 3px solid #0a0f15;
    border-radius: 38px;
    background-color: #1f272a;
}

.reaction svg {
    width: 48px;
    height: 44px;
}

/* Dates */
.day {
    align-self: center;
    margin: 24px 0 23px;
    padding: 16px 24px;
    border-radius: 16px;
    background-color: #10161b;
    color: #8b9094;
    font-size: 35px;
    font-weight: 500;
    line-height: 40px;
}

.day-floating {
    position: absolute;
    top: 5px;
    z-index: 1;
    margin: 0;
    padding: 18px 26px;
    background-color: #12181c;
}

.big-emoji {
    align-self: flex-end;
    display: flex;
    flex-direction: column;
    align-items: flex-end;
    gap: 22px;
    margin-top: 37px;
}

.heart {
    width: 122px;
    height: 111px;
    margin-right: 2px;
}

.pill {
    margin: 0 6px 0 0;
    padding: 18px 18px 18px 22px;
    border-radius: 38px;
    background-color: #144d37;
}

/* Composer */
.composer {
    display: flex;
    align-items: flex-end;
    gap: 25px;
    padding: 0 26px 15px 25px;
}

.field {
    flex: 1;
    display: flex;
    align-items: center;
    height: 132px;
    margin-bottom: -2px;
    padding: 0 35px 0 37px;
    border-radius: 66px;
    background-color: #1f272a;
}

.field svg {
    display: block;
    fill: none;
    stroke: #8d9498;
    stroke-width: 6px;
    stroke-linejoin: round;
    stroke-linecap: round;
}

.field .fill {
    fill: #8d9498;
    stroke: none;
}

.input-wrap {
    position: relative;
    flex: 1;
    margin-left: 38px;
}

.input-wrap input {
    display: block;
    width: 100%;
    height: 68px;
    padding: 0;
    border: none;
    outline: none;
    background: none;
    color: #f7fbfa;
    font-family: inherit;
    font-size: 51px;
}

.input-wrap input::placeholder {
    color: #8b9296;
    opacity: 1;
}

.caret {
    position: absolute;
    top: 0;
    left: 0;
    width: 6px;
    height: 68px;
    background-color: #25b863;
}

.camera {
    margin-left: 90px;
}

.mic {
    display: flex;
    align-items: center;
    justify-content: center;
    width: 135px;
    height: 135px;
    border-radius: 50%;
    background-color: #23c265;
}

/* Floating launcher peeking in from the corner */
.bubble-launcher {
    position: absolute;
    right: 0;
    bottom: 0;
    display: flex;
    padding: 15px 3px 4px 14px;
    border-top-left-radius: 47px;
    background-color: #1677ff;
}
```
